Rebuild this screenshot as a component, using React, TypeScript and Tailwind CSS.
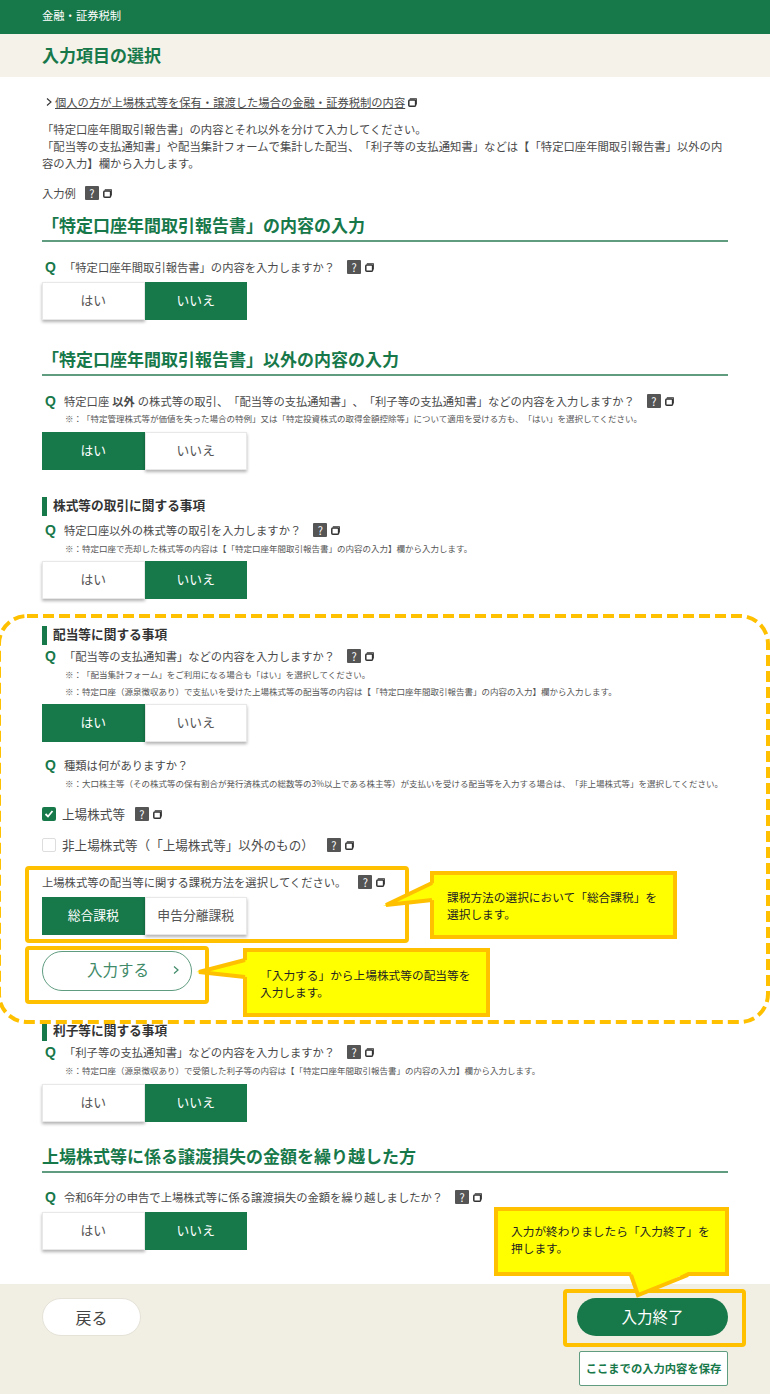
import type { ReactNode } from "react"

function WindowIcon({ className = "" }: { className?: string }) {
  return (
    <svg className={className} width="9" height="9" viewBox="0 0 9 9">
      <rect x="0.8" y="2" width="6.8" height="6.2" rx="1" fill="none" stroke="#333333" strokeWidth="1.5" />
      <path d="M1.8 0.7h6.5v5.8" fill="none" stroke="#333333" strokeWidth="1.1" />
    </svg>
  )
}

function Help({ className = "" }: { className?: string }) {
  return (
    <span className={`inline-flex items-center align-middle gap-[4px] ${className}`}>
      <span className="w-[14px] h-[14px] rounded-[1px] bg-[#555555] text-white text-[11px] leading-[14px] text-center">?</span>
      <WindowIcon />
    </span>
  )
}

function Heading({ children, className = "" }: { children: ReactNode; className?: string }) {
  return (
    <h2 className={`text-[17px] leading-[24px] font-bold text-[#17784a] border-b-2 border-[#5f9c80] h-[29px] ${className}`}>
      {children}
    </h2>
  )
}

function SubHeading({ children, className = "" }: { children: ReactNode; className?: string }) {
  return (
    <h3 className={`border-l-[5px] border-[#17784a] pl-[6px] text-[12.7px] leading-[15px] font-bold text-[#333333] h-[19px] ${className}`}>
      {children}
    </h3>
  )
}

function Question({ children, className = "" }: { children: ReactNode; className?: string }) {
  return (
    <div className={`flex items-center h-[18px] text-[11.3px] text-[#4a4a4a] whitespace-nowrap ${className}`}>
      <span className="w-[22px] pl-[3px] text-[14px] font-bold text-[#17784a] font-['Liberation_Sans',sans-serif]">Q</span>
      {children}
    </div>
  )
}

function Note({ children, className = "" }: { children: ReactNode; className?: string }) {
  return <p className={`pl-[23px] text-[8.5px] leading-[16px] text-[#555555] whitespace-nowrap ${className}`}>{children}</p>
}

function Toggle({ left, right, active, className = "" }: { left: string; right: string; active: "left" | "right"; className?: string }) {
  const on = "bg-[#17784a] text-white border border-[#17784a]"
  const off = "bg-white text-[#555555] border border-[#e8e8e8] shadow-[0_2px_3px_rgba(0,0,0,0.3)]"
  return (
    <div className={`flex w-[205px] h-[38px] text-[12.8px] pb-0 ${className}`}>
      <div className={`flex-1 flex items-center justify-center pb-[2px] ${active === "left" ? on : off}`}>{left}</div>
      <div className={`flex-1 flex items-center justify-center pb-[2px] ${active === "right" ? on : off}`}>{right}</div>
    </div>
  )
}

function Check({ checked, children, className = "" }: { checked?: boolean; children: ReactNode; className?: string }) {
  return (
    <div className={`flex items-center h-[18px] text-[12.6px] text-[#4a4a4a] ${className}`}>
      {checked ? (
        <span className="w-[14px] h-[14px] rounded-[2px] bg-[#17784a] flex items-center justify-center mr-[6px]">
          <svg width="10" height="10" viewBox="0 0 10 10">
            <path d="M1.5 5l2.5 2.5L8.5 2" fill="none" stroke="#ffffff" strokeWidth="1.8" />
          </svg>
        </span>
      ) : (
        <span className="w-[14px] h-[14px] rounded-[2px] bg-white border border-[#dddddd] mr-[6px]" />
      )}
      {children}
    </div>
  )
}

function Callout({ box, text, tip, base }: { box: string; text: string[]; tip: string; base: string }) {
  return (
    <>
      <div className={`absolute bg-[#ffff00] border-[4px] border-[#ffc000] flex flex-col justify-center text-[11.7px] leading-[17px] text-[#222222] ${box}`}>
        {text.map((t) => (
          <span key={t}>{t}</span>
        ))}
      </div>
      <svg className="absolute left-0 top-0 pointer-events-none" width="770" height="1394">
        <polygon points={tip} fill="#ffff00" />
        <polyline points={base} fill="none" stroke="#ffc000" strokeWidth="4" />
      </svg>
    </>
  )
}

export default function App() {
  return (
    <div className="relative w-[770px] h-[1394px] overflow-hidden bg-white font-['Noto_Sans_CJK_JP','Noto_Sans',sans-serif] [text-spacing-trim:space-all]">
      <header className="h-[34px] bg-[#17784a] pl-[42px] text-[11.3px] leading-[30px] text-white">金融・証券税制</header>
      <div className="h-[43px] bg-[#f5f2ea] pl-[42px] text-[17px] leading-[41px] font-bold text-[#17784a]">入力項目の選択</div>

      <main className="px-[42px]">
        <div className="mt-[16px] flex items-center h-[18px] pl-[3px] text-[11.3px] text-[#4a4a4a]">
          <svg className="mr-[2px]" width="8" height="10" viewBox="0 0 8 10">
            <path d="M2 1.5L6 5L2 8.5" fill="none" stroke="#333333" strokeWidth="1.1" />
          </svg>
          <span className="underline">個人の方が上場株式等を保有・譲渡した場合の金融・証券税制の内容</span>
          <WindowIcon className="ml-[3px]" />
        </div>
        <p className="mt-[10px] w-[686px] text-[11.35px] leading-[17px] text-[#4a4a4a]">
          「特定口座年間取引報告書」の内容とそれ以外を分けて入力してください。
          <br />
          「配当等の支払通知書」や配当集計フォームで集計した配当、「利子等の支払通知書」などは【「特定口座年間取引報告書」以外の内容の入力】欄から入力します。
        </p>
        <div className="mt-[12px] flex items-center h-[18px] text-[11.3px] text-[#4a4a4a]">
          入力例
          <Help className="ml-[9px]" />
        </div>

        <Heading className="mt-[11px]">「特定口座年間取引報告書」の内容の入力</Heading>
        <Question className="mt-[16px]">
          「特定口座年間取引報告書」の内容を入力しますか？
          <Help className="ml-[12px]" />
        </Question>
        <Toggle className="mt-[6px]" left="はい" right="いいえ" active="right" />

        <Heading className="mt-[27px]">「特定口座年間取引報告書」以外の内容の入力</Heading>
        <Question className="mt-[16px]">
          特定口座 <b className="mx-[3px]">以外</b> の株式等の取引、「配当等の支払通知書」、「利子等の支払通知書」などの内容を入力しますか？
          <Help className="ml-[12px]" />
        </Question>
        <Note>※：「特定管理株式等が価値を失った場合の特例」又は「特定投資株式の取得金額控除等」について適用を受ける方も、「はい」を選択してください。</Note>
        <Toggle className="mt-[6px]" left="はい" right="いいえ" active="left" />

        <SubHeading className="mt-[27px]">株式等の取引に関する事項</SubHeading>
        <Question className="mt-[5px]">
          特定口座以外の株式等の取引を入力しますか？
          <Help className="ml-[12px]" />
        </Question>
        <Note className="mt-[1px]">※：特定口座で売却した株式等の内容は【「特定口座年間取引報告書」の内容の入力】欄から入力します。</Note>
        <Toggle className="mt-[5px]" left="はい" right="いいえ" active="right" />

        <SubHeading className="mt-[27px]">配当等に関する事項</SubHeading>
        <Question className="mt-[2px]">
          「配当等の支払通知書」などの内容を入力しますか？
          <Help className="ml-[12px]" />
        </Question>
        <Note className="mt-[1px]">※：「配当集計フォーム」をご利用になる場合も「はい」を選択してください。</Note>
        <Note className="mt-[1px]">※：特定口座（源泉徴収あり）で支払いを受けた上場株式等の配当等の内容は【「特定口座年間取引報告書」の内容の入力】欄から入力します。</Note>
        <Toggle className="mt-[5px]" left="はい" right="いいえ" active="left" />

        <Question className="mt-[14px]">種類は何がありますか？</Question>
        <Note className="mt-[1px]">※：大口株主等（その株式等の保有割合が発行済株式の総数等の3%以上である株主等）が支払いを受ける配当等を入力する場合は、「非上場株式等」を選択してください。</Note>
        <Check checked className="mt-[14px]">
          上場株式等
          <Help className="ml-[10px]" />
        </Check>
        <Check className="mt-[13px]">
          非上場株式等（「上場株式等」以外のもの）
          <Help className="ml-[13px]" />
        </Check>
        <div className="mt-[19px] flex items-center h-[18px] text-[11.3px] text-[#4a4a4a]">
          上場株式等の配当等に関する課税方法を選択してください。
          <Help className="ml-[12px]" />
        </div>
        <Toggle className="mt-[6px]" left="総合課税" right="申告分離課税" active="left" />
        <button className="mt-[16px] pb-[2px] flex items-center w-[150px] h-[40px] rounded-full border border-[#5f9c80] bg-white text-[15.5px] text-[#3f8a68]">
          <span className="ml-[44px]">入力する</span>
          <svg className="ml-[23px]" width="8" height="10" viewBox="0 0 8 10">
            <path d="M2 1.5L6 5L2 8.5" fill="none" stroke="#3f8a68" strokeWidth="1.2" />
          </svg>
        </button>

        <SubHeading className="mt-[31px]">利子等に関する事項</SubHeading>
        <Question className="mt-[2px]">
          「利子等の支払通知書」などの内容を入力しますか？
          <Help className="ml-[12px]" />
        </Question>
        <Note className="mt-[1px]">※：特定口座（源泉徴収あり）で受領した利子等の内容は【「特定口座年間取引報告書」の内容の入力】欄から入力します。</Note>
        <Toggle className="mt-[6px]" left="はい" right="いいえ" active="right" />

        <Heading className="mt-[22px]">上場株式等に係る譲渡損失の金額を繰り越した方</Heading>
        <Question className="mt-[15px]">
          令和6年分の申告で上場株式等に係る譲渡損失の金額を繰り越しましたか？
          <Help className="ml-[12px]" />
        </Question>
        <Toggle className="mt-[6px]" left="はい" right="いいえ" active="right" />
      </main>

      <footer className="absolute left-0 right-0 bottom-0 h-[110px] bg-[#f1eee3] px-[42px] pt-[14px] flex justify-between">
        <button className="w-[99px] h-[38px] rounded-full bg-white border border-[#e5e2d8] text-[16px] text-[#444444]">戻る</button>
        <div className="flex flex-col items-end">
          <button className="w-[151px] h-[38px] rounded-full bg-[#17784a] text-[15.5px] text-white">入力終了</button>
          <button className="mt-[15px] w-[149px] h-[35px] bg-white border border-[#5f9c80] rounded-[2px] text-[11.3px] font-bold text-[#17784a]">ここまでの入力内容を保存</button>
        </div>
      </footer>

      <svg className="absolute left-0 top-0 pointer-events-none" width="770" height="1394">
        <rect x="-1" y="616" width="769" height="406" rx="28" fill="none" stroke="#ffc000" strokeWidth="4" strokeDasharray="11 5" />
      </svg>
      <div className="absolute left-[25px] top-[866px] w-[384px] h-[77px] border-[4px] border-[#ffc000] rounded-[4px]" />
      <div className="absolute left-[25px] top-[946px] w-[184px] h-[58px] border-[4px] border-[#ffc000] rounded-[4px]" />
      <div className="absolute left-[563px] top-[1289px] w-[183px] h-[58px] border-[4px] border-[#ffc000] rounded-[4px]" />

      <Callout
        box="left-[430px] top-[871px] w-[247px] h-[68px] pl-[13px]"
        text={["課税方法の選択において「総合課税」を", "選択します。"]}
        tip="434,883 383,906 434,900"
        base="432,883 386,905 432,900"
      />
      <Callout
        box="left-[243px] top-[948px] w-[247px] h-[69px] pl-[13px]"
        text={["「入力する」から上場株式等の配当等を", "入力します。"]}
        tip="247,960 196,972 247,977"
        base="245,960 199,972 245,977"
      />
      <Callout
        box="left-[494px] top-[1207px] w-[235px] h-[69px] pl-[13px] pb-[6px]"
        text={["入力が終わりましたら「入力終了」を", "押します。"]}
        tip="631,1272 638,1297 688,1272"
        base="631,1275 638,1295 688,1275"
      />
    </div>
  )
}
